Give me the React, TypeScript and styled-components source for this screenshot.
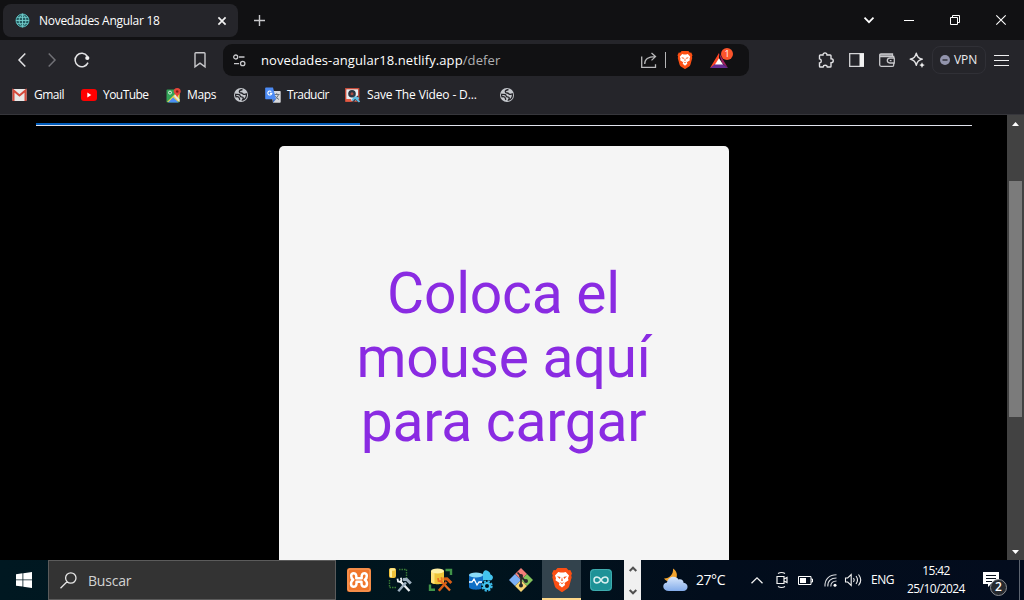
import React from "react";
import styled, { createGlobalStyle } from "styled-components";

const Global = createGlobalStyle`
  * { box-sizing: border-box; }
  body { margin: 0; background: #000; overflow: hidden; }
`;

const Screen = styled.div`
  width: 1024px;
  height: 600px;
  display: flex;
  flex-direction: column;
  overflow: hidden;
  background: #000;
  font-family: "Open Sans", "Noto Sans", sans-serif;
  color: #fff;
  svg { display: block; flex: none; overflow: visible; }
`;

const TabStrip = styled.header`
  height: 40px;
  flex: none;
  display: flex;
  align-items: center;
  background: #111113;
  padding-left: 3px;
`;

const Tab = styled.div`
  width: 235px;
  height: 33px;
  margin-top: 1px;
  padding: 0 12px;
  display: flex;
  align-items: center;
  border-radius: 8px;
  background: #25252a;
`;

const Label = styled.span<{ $size?: number; $gap?: number; $ls?: number; $color?: string }>`
  font-size: ${(p) => p.$size ?? 12}px;
  letter-spacing: ${(p) => p.$ls ?? 0}px;
  margin-left: ${(p) => p.$gap ?? 0}px;
  color: ${(p) => p.$color ?? "#fff"};
  line-height: 16px;
  white-space: nowrap;
`;

const Spacer = styled.div`
  flex: 1;
`;

const IconButton = styled.button<{ $w: number }>`
  width: ${(p) => p.$w}px;
  height: 100%;
  padding: 0;
  border: 0;
  background: none;
  display: flex;
  flex: none;
  align-items: center;
  justify-content: center;
`;

const Toolbar = styled.nav`
  height: 40px;
  flex: none;
  display: flex;
  align-items: center;
  background: #25252a;
  padding: 0 8px 0 7px;
`;

const AddressBar = styled.div`
  width: 526px;
  height: 32px;
  margin-left: 8px;
  display: flex;
  align-items: center;
  border-radius: 9px;
  background: #111113;
`;

const Divider = styled.div`
  width: 1px;
  height: 16px;
  background: #b4b4b6;
`;

const Rewards = styled.div`
  position: relative;
  margin-left: 17px;
`;

const Badge = styled.span`
  position: absolute;
  left: 11px;
  top: -5px;
  width: 12px;
  height: 12px;
  border-radius: 50%;
  background: #fb542b;
  color: #fff;
  font-size: 9px;
  line-height: 12px;
  text-align: center;
`;

const VpnButton = styled.div`
  width: 54px;
  height: 28px;
  display: flex;
  align-items: center;
  padding-left: 7px;
  border: 1px solid #303036;
  border-radius: 8px;
`;

const Bookmarks = styled.nav`
  height: 35px;
  flex: none;
  display: flex;
  align-items: center;
  padding: 0 0 4px 12px;
  background: #25252a;
  border-bottom: 1px solid #36363b;
`;

const Bookmark = styled.a<{ $w: number }>`
  width: ${(p) => p.$w}px;
  flex: none;
  display: flex;
  align-items: center;
`;

const Viewport = styled.main`
  height: 445px;
  flex: none;
  display: flex;
  overflow: hidden;
`;

const Page = styled.div`
  width: 1007px;
  padding: 8px 35px 0 36px;
  display: flex;
  flex-direction: column;
  align-items: center;
`;

const TabUnderline = styled.div`
  width: 936px;
  height: 3px;
  flex: none;
  border-bottom: 1px solid #e0e2ec;
  margin-bottom: 20px;
`;

const ActiveIndicator = styled.div`
  width: 324px;
  height: 2px;
  background: #005cbb;
`;

const Placeholder = styled.section`
  width: 450px;
  height: 450px;
  flex: none;
  padding: 116px 60px 0 59px;
  border-radius: 5px;
  background: #f5f5f5;
  color: #8a2be2;
  font-family: Roboto, sans-serif;
  font-size: 57px;
  line-height: 64px;
  letter-spacing: -0.25px;
  text-align: center;
`;

const Scrollbar = styled.div`
  width: 17px;
  display: flex;
  flex-direction: column;
  align-items: center;
  background: #424242;
`;

const ScrollArrow = styled.div`
  width: 17px;
  height: 17px;
  flex: none;
  display: flex;
  align-items: center;
  justify-content: center;
`;

const Thumb = styled.div`
  width: 13px;
  height: 236px;
  margin-top: 49px;
  background: #7b7b7b;
`;

const Taskbar = styled.footer`
  height: 40px;
  flex: none;
  display: flex;
  align-items: center;
  background: linear-gradient(90deg, #001821 0%, #00141d 45%, #020d1c 70%, #030c1d 100%);
`;

const SearchBox = styled.div`
  width: 288px;
  height: 40px;
  flex: none;
  display: flex;
  align-items: center;
  padding-left: 11px;
  border: 1px solid #5b5b5b;
  background: #333;
`;

const SearchText = styled(Label)`
  padding-top: 2px;
`;

const AppButton = styled.div<{ $w?: number; $active?: boolean }>`
  width: ${(p) => p.$w ?? 40}px;
  height: 40px;
  flex: none;
  display: flex;
  align-items: center;
  justify-content: center;
  background: ${(p) => (p.$active ? "#33434d" : "transparent")};
  border-bottom: ${(p) => (p.$active ? "2px solid #ffd88a" : "0")};
  padding-top: ${(p) => (p.$active ? "2px" : "0")};
`;

const Stepper = styled.div`
  width: 17px;
  height: 40px;
  flex: none;
  display: flex;
  flex-direction: column;
  align-items: center;
  justify-content: space-between;
  padding: 6px 0 5px;
  background: #f0f0f0;
`;

const Weather = styled.div`
  width: 104px;
  padding-left: 22px;
  flex: none;
  display: flex;
  align-items: center;
`;

const Clock = styled.time`
  width: 76px;
  flex: none;
  display: flex;
  flex-direction: column;
  align-items: center;
  gap: 2px;
`;

const Notifications = styled.div`
  position: relative;
  margin-left: 9px;
  width: 36px;
`;

const Count = styled.span`
  position: absolute;
  left: 7px;
  top: 7px;
  width: 17px;
  height: 17px;
  border: 1px solid #8b8e93;
  border-radius: 50%;
  background: #26292e;
  font-size: 12px;
  font-weight: 600;
  line-height: 14px;
  text-align: center;
`;

const DesktopEdge = styled.div`
  width: 1px;
  height: 40px;
  background: #5d6470;
`;

const Stroke = ({ w, h = w, d, c = "#e2e2e4", s = 1.4 }: { w: number; h?: number; d: string; c?: string; s?: number }) => (
  <svg width={w} height={h} viewBox={`0 0 ${w} ${h}`} fill="none" stroke={c} strokeWidth={s}>
    <path d={d} />
  </svg>
);

const Globe = () => (
  <svg width="14" height="14" viewBox="0 0 14 14">
    <circle cx="7" cy="7" r="7" fill="#c5c8cd" />
    <path d="M8.500 1.500C7 1.800 5.200 2.300 5.300 3.700c.1 1 .9 1.300 2 1.300 1.300 0 1.400 1 2.200 1.300.9.300 1.900-.200 2.900-.300.3 2.800-1.300 5.300-4 6.100.2-1 .9-1.100.9-2 0-1-1.200-1.100-2-1.200C6 8.800 6.500 7.200 5.200 6.700 4 6.300 2.700 6.500 1.700 6.300c-.2 1 0 1.700.3 2.500 1.100-.3 2.200-.1 2.900.6.600.7.500 1.600 1 2.500" fill="none" stroke="#25252a" strokeWidth="1.300" />
  </svg>
);

const Lion = ({ w, h }: { w: number; h: number }) => (
  <svg width={w} height={h} viewBox="0 0 20 24">
    <path d="M5.500 0h9l2 2.300 1.800-.2L20 5.500l-.8 2 .5 1.700-2.500 9c-.3 1-.9 1.700-1.700 2.300L10.800 23.700c-.5.4-1.100.4-1.600 0L4.500 20.500c-.8-.6-1.400-1.300-1.700-2.300L.3 9.200.8 7.500 0 5.500l1.700-3.400 1.800.2z" fill="#fb4f14" />
    <path d="M6.300 4l2.200.5h3l2.200-.5L17 7.500l-1 2.800.5 2-4 2.700.6 2L10 19.500l-3.100-2.500.6-2-4-2.700.5-2-1-2.800z" fill="#fff" />
    <path d="M5 8.200l3.500.8-.7 2zM15 8.200l-3.500.8.7 2zM10 9l.8 3.500-.8.800-.8-.8zM7.700 14L10 14.900l2.300-.9L10 16.200z" fill="#fb4f14" />
  </svg>
);

const Tools = ({ x, y, c1, c2 }: { x: number; y: number; c1: string; c2: string }) => (
  <g transform={`translate(${x} ${y})`} fill="none">
    <path d="M4 4L13 13.500" stroke={c1} strokeWidth="2.300" />
    <path d="M1 1.200L1.500 4 4 4.500 5 2.500 4.300.300" stroke={c1} strokeWidth="1.800" />
    <path d="M1.800 13.800L9.500 5" stroke={c2} strokeWidth="2.500" />
    <path d="M6.500 2L10 1.700 14.300 6" stroke={c2} strokeWidth="3" />
  </g>
);

export default function App() {
  return (
    <Screen>
      <Global />
      <TabStrip>
        <Tab>
          <svg width="15" height="15" viewBox="0 0 15 15" fill="none">
            <circle cx="7.500" cy="7.500" r="6.500" fill="#245c61" stroke="#55b2b3" />
            <path d="M1 7.500h13M2 4.300h11M2 10.700h11M7.500 1v13M7.500 1C3 4.500 3 10.500 7.500 14M7.500 1c4.500 3.500 4.500 9.500 0 13" stroke="#74cfcd" strokeWidth=".9" />
          </svg>
          <Label $gap={9} $ls={-0.28}>Novedades Angular 18</Label>
          <Spacer />
          <Stroke w={8} d="M.4.400l7.200 7.200M7.600.400L.4 7.600" c="#f2f2f2" s={1.700} />
        </Tab>
        <IconButton $w={42}><Stroke w={11} d="M5.500 0v11M0 5.500h11" c="#c8c8ca" /></IconButton>
        <Spacer />
        <IconButton $w={40}><Stroke w={10} h={6} d="M.5.700L5 5.200 9.500.700" c="#fff" s={1.700} /></IconButton>
        <IconButton $w={40}><Stroke w={10} h={1} d="M0 .5h10" c="#fff" s={1} /></IconButton>
        <IconButton $w={52}><Stroke w={10} d="M.5 2.500h7v7h-7zM2.500 2.500v-2h7v7h-2" c="#fff" s={1} /></IconButton>
        <IconButton $w={40}><Stroke w={10} d="M.3.300l9.400 9.400M9.700.300L.3 9.700" c="#fff" s={1.100} /></IconButton>
        <IconButton $w={3} />
      </TabStrip>

      <Toolbar>
        <IconButton $w={30}><Stroke w={8} h={14} d="M7.300.500L1 7l6.300 6.500" s={1.500} /></IconButton>
        <IconButton $w={30}><Stroke w={8} h={14} d="M.7.500L7 7 .7 13.500" c="#717176" s={1.500} /></IconButton>
        <IconButton $w={30}>
          <svg width="16" height="16" viewBox="0 0 16 16" fill="none">
            <path d="M13.300 4.200A6.700 6.700 0 1 0 14 10.600" stroke="#e2e2e4" strokeWidth="1.500" />
            <circle cx="13.300" cy="6" r="2.100" fill="#f2f2f2" />
          </svg>
        </IconButton>
        <Spacer />
        <IconButton $w={30}><Stroke w={12} h={16} d="M1 1.500Q1 .700 1.800.700h8.400q.8 0 .8.800v13.300L6 11.200l-5 3.600z" c="#c8c8cb" /></IconButton>
        <AddressBar>
          <IconButton $w={32}>
            <svg width="13" height="13" viewBox="0 0 13 13" fill="none" stroke="#c8c8cb" strokeWidth="1.300">
              <circle cx="2.700" cy="3" r="2" /><path d="M6 3h5.500M1 9.700h5" /><circle cx="9.700" cy="9.500" r="2.200" />
            </svg>
          </IconButton>
          <Label $size={13} $gap={6} $ls={0.100}>novedades-angular18.netlify.app<Label $size={13} $ls={0.100} $color="#b0b0b2">/defer</Label></Label>
          <Spacer />
          <Stroke w={16} h={16} d="M.7 4.500v10.800h13.800v-3M3.700 12C3.700 7 7 4.600 14 4.600M10.500 1l4 3.600-4 3.800" c="#b9b9bb" s={1.300} />
          <IconButton $w={8} />
          <Divider />
          <IconButton $w={11} />
          <Lion w={16} h={18} />
          <Rewards>
            <svg width="18" height="15" viewBox="0 0 18 15">
              <path d="M9 0L0 15l9-5z" fill="#ff4724" />
              <path d="M9 0l9 15-6-5z" fill="#9e1f63" />
              <path d="M0 15h18l-5-4H5z" fill="#662d91" />
              <path d="M9 5.200L5 11.500h8z" fill="#fff" />
            </svg>
            <Badge>1</Badge>
          </Rewards>
          <IconButton $w={21} />
        </AddressBar>
        <IconButton $w={61} />
        <IconButton $w={31}>
          <Stroke w={16} h={16} d="M2.300 3H5C4.700.200 9.300.200 9 3h3.200q.8 0 .8.800V6.800c3 0 3 3.900 0 3.900v3.500q0 .8-.8.800H9.300c-.2-2.300-4-2.300-4.200 0H2.300q-.8 0-.8-.8v-3.300c2.400-.2 2.400-3.800 0-4V3.800q0-.8.800-.8z" />
        </IconButton>
        <IconButton $w={30}>
          <svg width="15" height="14" viewBox="0 0 15 14"><path d="M.7.700h13.600v12.600H.7z" fill="none" stroke="#d4d4d6" strokeWidth="1.300" /><path d="M10.500.500H15V13.500h-4.500z" fill="#f2f2f2" /></svg>
        </IconButton>
        <IconButton $w={31}>
          <svg width="16" height="14" viewBox="0 0 16 14" fill="none" stroke="#c8c8cb" strokeWidth="1.300"><path d="M1 1h12.500v2.500H1z" fill="#8b8b8f" stroke="none" /><path d="M14.700 4.700V3.500H1M13.500 3V1H2Q.7 1 .7 2.300v9.500q0 1.500 1.500 1.500h11.300q1.200 0 1.200-1.200v-1.500M15.300 5.200h-4.500q-2.500 0-2.500 2.400t2.500 2.400h4.500zM10.800 7.600h1.700" /></svg>
        </IconButton>
        <IconButton $w={30}>
          <svg width="16" height="16" viewBox="0 0 16 16"><path d="M7.300 1.200C8.300 5 9.300 6 13.300 7.200 9.300 8.400 8.300 9.400 7.300 13.200 6.200 9.400 5.200 8.400 1.200 7.200 5.200 6 6.200 5 7.300 1.200z" fill="none" stroke="#e2e2e4" strokeWidth="1.400" strokeLinejoin="round" /><path d="M13 10.300l.9 1.900 1.900.9-1.900.9-.9 1.900-.9-1.900-1.900-.9 1.900-.9z" fill="#f2f2f2" /></svg>
        </IconButton>
        <VpnButton>
          <svg width="10" height="10" viewBox="0 0 10 10"><circle cx="5" cy="5" r="5" fill="#9294ac" /><path d="M2.500 5h5" stroke="#25252a" strokeWidth="1.300" /></svg>
          <Label $gap={4} $ls={-0.100} $color="#ececee">VPN</Label>
        </VpnButton>
        <IconButton $w={30}><Stroke w={15} h={12} d="M0 1.500h15M0 6.500h15M0 11.500h15" c="#f0f0f1" s={1} /></IconButton>
      </Toolbar>

      <Bookmarks>
        <Bookmark $w={69}>
          <svg width="15" height="12" viewBox="0 0 15 12"><rect x=".5" width="14" height="12" rx="1" fill="#e9e9e9" /><path d="M1.500 12V1.500l6 5 6-5V12" fill="none" stroke="#d54b3d" strokeWidth="2" /></svg>
          <Label $gap={7} $ls={-0.500}>Gmail</Label>
        </Bookmark>
        <Bookmark $w={85}>
          <svg width="16" height="12" viewBox="0 0 16 12"><rect width="16" height="12" rx="3" fill="#f00" /><path d="M6.300 3.500v5l4-2.500z" fill="#fff" /></svg>
          <Label $gap={6} $ls={-0.550}>YouTube</Label>
        </Bookmark>
        <Bookmark $w={68}>
          <svg width="15" height="15" viewBox="0 0 15 15">
            <rect x=".5" y="1.500" width="13" height="13" rx="1" fill="#32a457" />
            <path d="M1 14L12 3l1.500 1.500v9z" fill="#f1d14f" /><path d="M2 14.500l5.200-5.200 5.300 5.200z" fill="#4c8df5" /><path d="M8 8l1.500-1.500 4 5v2.500z" fill="#e8e8e8" />
            <circle cx="4" cy="4.600" r="1.500" fill="none" stroke="#fff" strokeWidth=".8" />
            <path d="M11.200 0a3.500 3.500 0 0 1 3.500 3.500c0 2.300-2.700 3-3.500 6-.8-3-3.500-3.700-3.500-6A3.500 3.500 0 0 1 11.200 0z" fill="#e44439" /><circle cx="11.200" cy="3.500" r="1.300" fill="#7f2018" />
          </svg>
          <Label $gap={6} $ls={-0.350}>Maps</Label>
        </Bookmark>
        <Bookmark $w={31}><Globe /></Bookmark>
        <Bookmark $w={80}>
          <svg width="16" height="16" viewBox="0 0 16 16">
            <path d="M6 4h9q.7 0 .7.700V15q0 .8-.8.800H8z" fill="#d8d9dc" /><path d="M9 7.500h5.500M11.700 6.200v1.300M13.500 7.700Q12.500 11 9.800 12.200M10.300 9q1 2.200 3.700 3.500" fill="none" stroke="#6b747e" />
            <path d="M1 .5h7l3 11.700H1q-.8 0-.8-.8V1.300Q.2.500 1 .5z" fill="#4c8bf5" /><path d="M8 12.200h3L8 15.800z" fill="#3569c8" />
            <path d="M6.300 4.700A2 2 0 1 0 6.800 6.400H5" fill="none" stroke="#fff" strokeWidth="1.100" />
          </svg>
          <Label $gap={6} $ls={-0.600}>Traducir</Label>
        </Bookmark>
        <Bookmark $w={155}>
          <svg width="15" height="15" viewBox="0 0 15 15">
            <rect x=".7" y=".7" width="13" height="12.500" fill="#e9ecef" stroke="#c84a38" strokeWidth="1.300" />
            <circle cx="7" cy="5.800" r="3.800" fill="#293340" /><circle cx="7" cy="5.800" r="1.500" fill="#a94d43" />
            <path d="M1 13.500V11h5v2.500z" fill="#e65b43" /><path d="M8 7.500l5 6M13 8l-5 6" stroke="#333f4d" strokeWidth="1.600" /><path d="M7 12.300l3-3 1.500 1.500L14.500 14M11 9.500l3 1" stroke="#5bbce4" strokeWidth="1.800" fill="none" />
          </svg>
          <Label $gap={7} $ls={-0.140}>Save The Video - D...</Label>
        </Bookmark>
        <Bookmark $w={14}><Globe /></Bookmark>
      </Bookmarks>

      <Viewport>
        <Page>
          <TabUnderline><ActiveIndicator /></TabUnderline>
          <Placeholder>Coloca el mouse aquí para cargar</Placeholder>
        </Page>
        <Scrollbar>
          <ScrollArrow><svg width="7" height="4" viewBox="0 0 7 4"><path d="M0 4l3.500-4L7 4z" fill="#fff" /></svg></ScrollArrow>
          <Thumb />
          <Spacer />
          <ScrollArrow><svg width="7" height="4" viewBox="0 0 7 4"><path d="M0 0l3.500 4L7 0z" fill="#fff" /></svg></ScrollArrow>
        </Scrollbar>
      </Viewport>

      <Taskbar>
        <AppButton $w={48}>
          <svg width="16" height="16" viewBox="0 0 16 16"><path d="M0 2.300L6.500 1.300v6.200H0zM7.300 1.200L16 0v7.500H7.300zM0 8.300h6.500v6.300L0 13.700zM7.300 8.300H16V16l-8.700-1.200z" fill="#fff" /></svg>
        </AppButton>
        <SearchBox>
          <Stroke w={17} h={17} d="M16 6a5.200 5.200 0 1 1-10.400 0A5.200 5.200 0 0 1 16 6zM7 9.700L.500 16.300" c="#e6e6e6" s={1.300} />
          <SearchText $size={14} $gap={11} $ls={-0.200} $color="#d2d2d2">Buscar</SearchText>
        </SearchBox>
        <AppButton $w={46}>
          <svg width="24" height="24" viewBox="0 0 24 24">
            <rect width="24" height="24" rx="2.500" fill="#f0762b" /><rect x="1" y="1" width="22" height="22" rx="2" fill="none" stroke="#f9a468" />
            <path d="M9.300 10.300h5.400C14.300 6.500 15.500 5.300 17.200 5.300c3.300 0 3.500 4.300.6 6.500 3.300 2.200 2.700 6.900-.6 6.900-2.300 0-3-1.700-2.700-5H9.500c.3 3.300-.4 5-2.700 5-3.300 0-3.900-4.700-.6-6.900-2.900-2.200-2.700-6.500.6-6.500 1.700 0 2.900 1.200 2.500 5z" fill="none" stroke="#fff" strokeWidth="2.500" strokeLinejoin="round" />
          </svg>
        </AppButton>
        <AppButton $w={36}>
          <svg width="24" height="24" viewBox="0 0 24 24">
            <rect x="1" y="0" width="7" height="10" rx="2" fill="#f0c23b" /><path d="M2 1h2v8H2z" fill="#fff0a0" /><ellipse cx="4.500" cy="1.500" rx="3" ry="1.200" fill="#ffe890" />
            <path d="M11 1.500h7.500V10M1.500 12v7.500H9" fill="none" stroke="#397b35" strokeWidth="1.400" strokeDasharray="1.500 1" />
            <Tools x={8.5} y={9.5} c1="#edf1f4" c2="#9eb0bf" />
          </svg>
        </AppButton>
        <AppButton $w={44}>
          <svg width="24" height="24" viewBox="0 0 24 24">
            <path d="M3 3v11c0 3 13 3 13 0V3z" fill="#eec439" /><path d="M3 3v11c.7 1 2 1.500 3.500 1.700V3z" fill="#ffe27a" /><ellipse cx="9.500" cy="3" rx="6.500" ry="2.500" fill="#fff0a5" />
            <path d="M17.500 2H23v5M2 16.500v5.300h5" fill="none" stroke="#409449" strokeWidth="2.400" /><Tools x={9} y={9} c1="#eb7025" c2="#d95d16" />
          </svg>
        </AppButton>
        <AppButton $w={38}>
          <svg width="26" height="24" viewBox="0 0 26 24">
            <path d="M12 11q-1-4 2.500-4.500Q16 .5 20 3q2.300 1 2.500 3.500Q26 8 24.500 11q-.7 1.500-3 1.500H12z" fill="#43c4ee" />
            <path d="M1 7v12c0 3.500 14 3.500 14 0V7z" fill="#0f6fc6" /><ellipse cx="8" cy="7" rx="7" ry="2.500" fill="#8adcf7" /><path d="M1 14h3l2-3 3 6 2-3h3" stroke="#fff" fill="none" strokeWidth="1.300" />
            <circle cx="19" cy="18" r="6" fill="#00141d" /><circle cx="19" cy="18" r="4.700" fill="none" stroke="#39b8e8" strokeWidth="2" strokeDasharray="2.200 1.490" /><circle cx="19" cy="18" r="3" fill="none" stroke="#43c4ee" strokeWidth="2" />
          </svg>
        </AppButton>
        <AppButton $w={42}>
          <svg width="24" height="24" viewBox="0 0 24 24"><path d="M12 0l6 6-6 6-6-6z" fill="#f27e78" /><path d="M6 6l6 6-6 6-6-6z" fill="#7caff5" /><path d="M18 6l6 6-6 6-6-6z" fill="#83c45c" /><path d="M12 12l6 6-6 6-6-6z" fill="#f6d474" /><path d="M8.500 4.500L12 8v10M12 9l5 4.500" stroke="#26272b" strokeWidth="1.700" fill="none" /><circle cx="12" cy="8" r="2" fill="#26272b" /><circle cx="12" cy="17.500" r="2" fill="#26272b" /><circle cx="17" cy="13" r="2" fill="#26272b" /></svg>
        </AppButton>
        <AppButton $w={39} $active><Lion w={20} h={24} /></AppButton>
        <AppButton $w={40}>
          <svg width="22" height="22" viewBox="0 0 22 22"><rect width="22" height="22" rx="4" fill="#1e9297" /><rect x=".5" y=".5" width="21" height="21" rx="4" fill="none" stroke="#41acaf" /><path d="M11 11C9.500 8.500 8.500 8 7 8a3 3 0 0 0 0 6c1.500 0 2.500-.5 4-3s2.500-3 4-3a3 3 0 0 1 0 6c-1.500 0-2.500-.5-4-3z" fill="none" stroke="#d9efef" strokeWidth="1.500" /></svg>
        </AppButton>
        <IconButton $w={3} />
        <Stepper>
          <Stroke w={8} h={6} d="M.7 5L4 1.700 7.300 5" c="#505050" s={2} />
          <Stroke w={8} h={6} d="M.7 1L4 4.300 7.300 1" c="#505050" s={2} />
        </Stepper>
        <Weather>
          <svg width="25" height="24" viewBox="0 0 25 24">
            <defs><linearGradient id="cloud" x1="0" y1="0" x2="0" y2="1"><stop offset="0" stopColor="#d8e7fc" /><stop offset="1" stopColor="#83acea" /></linearGradient></defs>
            <path d="M10 .5C16 4 15 13 8 13.500 5 14 2.500 12.500 1 10.500 7 10.500 10.500 6 10 .5z" fill="#f2a32d" />
            <path d="M6 23C-1 23-1.500 15 4 14.500 5 8 13 7 15.500 11.500c3-.8 5 1 5 3.200C26 15 26 23 20 23z" fill="url(#cloud)" />
          </svg>
          <Label $size={14} $gap={8} $ls={-0.450}>27°C</Label>
        </Weather>
        <IconButton $w={24}><Stroke w={12} h={7} d="M.5 6.300L6 .800l5.500 5.500" c="#f2f2f2" s={1.300} /></IconButton>
        <IconButton $w={25}><Stroke w={12} h={16} d="M1 4.500h7v7H1zM8 7l3-1.500v5L8 9M2 1.500Q5.500-.5 9 1.500M2 14.500q3.500 2 7 0" c="#f2f2f2" s={1.200} /></IconButton>
        <IconButton $w={23}>
          <svg width="15" height="9" viewBox="0 0 15 9"><path d="M.5.500h12.500v8H.5zM13 3h1.500v3H13" fill="none" stroke="#fff" /><path d="M2 2h6v5H2z" fill="#fff" /></svg>
        </IconButton>
        <IconButton $w={26}>
          <svg width="13" height="13" viewBox="0 0 13 13" fill="none" stroke="#d8dade" strokeWidth="1.100"><path d="M1 12.500C.5 5 5.500.8 12.500.8M3.800 12.500C3.500 7 7 4 12.500 4M6.800 12.500C6.700 9 9 7 12.500 7" /><circle cx="11" cy="11.200" r="1.500" fill="#fff" stroke="none" /></svg>
        </IconButton>
        <IconButton $w={20}><Stroke w={17} h={14} d="M.5 5h2.200l3.500-3.500v11L2.700 9H.5zM8.500 5q1.500 2 0 4M11 3q3 4 0 8M13.500 1.500q4.500 5.500 0 11" c="#f2f2f2" s={1.100} /></IconButton>
        <Label $gap={8} $ls={-0.500}>ENG</Label>
        <IconButton $w={4} />
        <Clock><Label $ls={-0.600}>15:42</Label><Label $ls={-0.600}>25/10/2024</Label></Clock>
        <Notifications>
          <svg width="16" height="16" viewBox="0 0 16 16"><path d="M0 0h16v12h-8l-3 3v-3H0z" fill="#fff" /><path d="M3 3.500h10M3 6.500h10M3 9.500h6" stroke="#07101d" /></svg>
          <Count>2</Count>
        </Notifications>
        <DesktopEdge />
      </Taskbar>
    </Screen>
  );
}
